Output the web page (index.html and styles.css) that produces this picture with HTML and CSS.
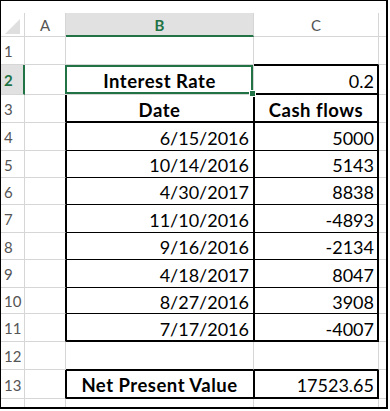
FILE: index.html
```html
<!DOCTYPE html>
<html>
<head>
<meta charset="utf-8">
<link rel="stylesheet" href="styles.css">
</head>
<body>
<div class="frame">
  <div class="sheet">
    <!-- header row -->
    <div class="cell corner"><svg width="23" height="23" viewBox="0 0 23 23"><polygon points="4,21 19,21 19,6" fill="#dfdfdf"/></svg></div>
    <div class="cell colhdr">A</div>
    <div class="cell colhdr active">B</div>
    <div class="cell colhdr">C</div>
    <div class="cell colhdr dcol"></div>

    <!-- row 1 -->
    <div class="cell rowhdr">1</div>
    <div class="cell"></div>
    <div class="cell"></div>
    <div class="cell kb"></div>
    <div class="cell dcol"></div>

    <!-- row 2 -->
    <div class="cell rowhdr selrow">2</div>
    <div class="cell"></div>
    <div class="cell data bold center selected">Interest Rate<span class="selbox"><span class="handle"></span></span></div>
    <div class="cell data right kr kb it ir ib">0.2</div>
    <div class="cell dcol"></div>

    <!-- row 3 -->
    <div class="cell rowhdr">3</div>
    <div class="cell kr"></div>
    <div class="cell data bold center il kr kb ib">Date</div>
    <div class="cell data bold center il ir kr kb ib">Cash flows</div>
    <div class="cell dcol"></div>

    <!-- row 4 -->
    <div class="cell rowhdr">4</div>
    <div class="cell kr"></div>
    <div class="cell data right il kr kb">6/15/2016</div>
    <div class="cell data right il ir kr kb">5000</div>
    <div class="cell dcol"></div>

    <!-- row 5 -->
    <div class="cell rowhdr">5</div>
    <div class="cell kr"></div>
    <div class="cell data right il kr kb">10/14/2016</div>
    <div class="cell data right il ir kr kb">5143</div>
    <div class="cell dcol"></div>

    <!-- row 6 -->
    <div class="cell rowhdr">6</div>
    <div class="cell kr"></div>
    <div class="cell data right il kr kb">4/30/2017</div>
    <div class="cell data right il ir kr kb">8838</div>
    <div class="cell dcol"></div>

    <!-- row 7 -->
    <div class="cell rowhdr">7</div>
    <div class="cell kr"></div>
    <div class="cell data right il kr kb">11/10/2016</div>
    <div class="cell data right il ir kr kb">-4893</div>
    <div class="cell dcol"></div>

    <!-- row 8 -->
    <div class="cell rowhdr">8</div>
    <div class="cell kr"></div>
    <div class="cell data right il kr kb">9/16/2016</div>
    <div class="cell data right il ir kr kb">-2134</div>
    <div class="cell dcol"></div>

    <!-- row 9 -->
    <div class="cell rowhdr">9</div>
    <div class="cell kr"></div>
    <div class="cell data right il kr kb">4/18/2017</div>
    <div class="cell data right il ir kr kb">8047</div>
    <div class="cell dcol"></div>

    <!-- row 10 -->
    <div class="cell rowhdr">10</div>
    <div class="cell kr"></div>
    <div class="cell data right il kr kb">8/27/2016</div>
    <div class="cell data right il ir kr kb">3908</div>
    <div class="cell dcol"></div>

    <!-- row 11 -->
    <div class="cell rowhdr">11</div>
    <div class="cell kr"></div>
    <div class="cell data right il kr kb ib">7/17/2016</div>
    <div class="cell data right il ir kr kb ib">-4007</div>
    <div class="cell dcol"></div>

    <!-- row 12 -->
    <div class="cell rowhdr">12</div>
    <div class="cell"></div>
    <div class="cell kb"></div>
    <div class="cell kb"></div>
    <div class="cell dcol"></div>

    <!-- row 13 -->
    <div class="cell rowhdr">13</div>
    <div class="cell kr"></div>
    <div class="cell data bold center it il kr kb ib">Net Present Value</div>
    <div class="cell data right it il ir kr kb ib">17523.65</div>
    <div class="cell dcol"></div>

    <!-- row 14 (partial) -->
    <div class="cell rowhdr last"></div>
    <div class="cell last"></div>
    <div class="cell last"></div>
    <div class="cell last"></div>
    <div class="cell dcol last"></div>
  </div>
</div>
</body>
</html>
```

FILE: styles.css
```css
html, body {
  margin: 0;
  padding: 0;
  background: #fff;
}

.frame {
  width: 388px;
  height: 409px;
  box-sizing: border-box;
  border: 1px solid #000;
  border-right-width: 2px;
  border-bottom-width: 2px;
  background: #fff;
  overflow: hidden;
}

.sheet {
  margin-top: 12px;
  display: grid;
  grid-template-columns: 24px 41px 188px 125px 7px;
  grid-template-rows: 24px 28px 30px 28px 28px 27px 27px 28px 27px 28px 26px 28px 28px 29px 8px;
  font-family: Lato, "Open Sans", sans-serif;
}

.cell {
  box-sizing: border-box;
  border-right: 1px solid #d6d6d6;
  border-bottom: 1px solid #d6d6d6;
  display: flex;
  align-items: center;
  min-width: 0;
  --it: 0 0 #0000;
  --ir: 0 0 #0000;
  --ib: 0 0 #0000;
  --il: 0 0 #0000;
  box-shadow: var(--it), var(--ir), var(--ib), var(--il);
}

.it { --it: inset 0 1px #000; }
.ir { --ir: inset -1px 0 #000; }
.ib { --ib: inset 0 -1px #000; }
.il { --il: inset 1px 0 #000; }
.kr { border-right-color: #000; }
.kb { border-bottom-color: #000; }

.dcol { border-right: none; }
.last { border-bottom: none; }

.corner {
  padding: 0;
  align-items: flex-start;
}
.corner svg { display: block; }

.colhdr {
  justify-content: center;
  font-size: 15px;
  color: #555;
  padding-top: 1px;
}
.colhdr.active {
  background: #e1e1e1;
  color: #217346;
  font-weight: bold;
  border-bottom: 2px solid #217346;
}

.rowhdr {
  font-size: 15px;
  color: #555;
  padding-left: 3px;
  padding-top: 1px;
}
.rowhdr.selrow {
  background: #e1e1e1;
  color: #217346;
  font-weight: bold;
  border-right: 2px solid #217346;
}

.data {
  font-size: 18px;
  color: #000;
  padding: 2px 3px 0 3px;
  white-space: nowrap;
}
.bold {
  font-weight: bold;
  font-size: 18.5px;
  letter-spacing: 0.5px;
}
.center { justify-content: center; }
.right { justify-content: flex-end; padding-right: 4px; }

.selected {
  position: relative;
  z-index: 2;
}
.selbox {
  position: absolute;
  top: 0;
  left: -1px;
  right: 0;
  bottom: 0;
  border: 2px solid #217346;
}
.handle {
  position: absolute;
  right: -5px;
  bottom: -5px;
  width: 5px;
  height: 5px;
  background: #217346;
  border: 1px solid #fff;
}
```
